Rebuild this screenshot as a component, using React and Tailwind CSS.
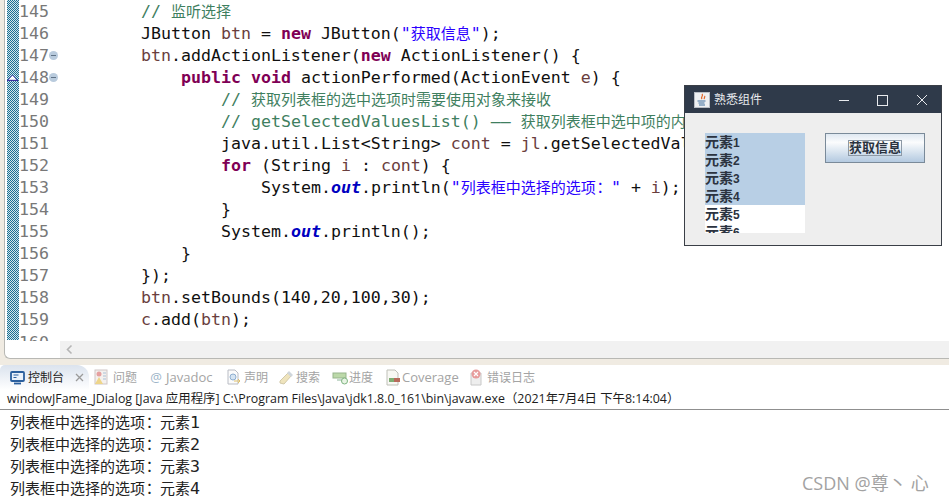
const codeFont = "font-['DejaVu_Sans_Mono','Noto_Sans_CJK_SC',monospace]";

const kw = "font-bold text-[#7f0055]";
const cm = "text-[#3f7f5f]";
const st = "text-[#2a00ff]";
const fd = "font-bold italic text-[#0000c0]";
const va = "text-[#6a3e3e]";
const cj = "text-[15px]";
// full width colon sits in the middle of its cell in the screenshot, a bit left of TC's
const colon = "ml-[-3px] mr-[3px] font-['Noto_Sans_CJK_TC',sans-serif]";

const lines = [
  {
    n: 145,
    indent: 2,
    code: (
      <span className={cm}>
        // <span className={cj}>监听选择</span>
      </span>
    ),
  },
  {
    n: 146,
    indent: 2,
    code: (
      <>
        JButton <span className={va}>btn</span> = <span className={kw}>new</span> JButton(
        <span className={st}>
          "<span className={cj}>获取信息</span>"
        </span>
        );
      </>
    ),
  },
  {
    n: 147,
    indent: 2,
    fold: true,
    code: (
      <>
        <span className={va}>btn</span>.addActionListener(<span className={kw}>new</span> ActionListener() {"{"}
      </>
    ),
  },
  {
    n: 148,
    indent: 3,
    fold: true,
    mark: true,
    code: (
      <>
        <span className={kw}>public</span> <span className={kw}>void</span> actionPerformed(ActionEvent <span className={va}>e</span>) {"{"}
      </>
    ),
  },
  {
    n: 149,
    indent: 4,
    code: (
      <span className={cm}>
        // <span className={cj}>获取列表框的选中选项时需要使用对象来接收</span>
      </span>
    ),
  },
  {
    n: 150,
    indent: 4,
    code: (
      <span className={cm}>
        // getSelectedValuesList() —— <span className={cj}>获取列表框中选中项的内容</span>
      </span>
    ),
  },
  {
    n: 151,
    indent: 4,
    code: (
      <>
        java.util.List&lt;String&gt; <span className={va}>cont</span> = <span className={va}>jl</span>.getSelectedValuesList();
      </>
    ),
  },
  {
    n: 152,
    indent: 4,
    code: (
      <>
        <span className={kw}>for</span> (String <span className={va}>i</span> : <span className={va}>cont</span>) {"{"}
      </>
    ),
  },
  {
    n: 153,
    indent: 5,
    code: (
      <>
        System.<span className={fd}>out</span>.println(
        <span className={st}>
          "<span className={cj}>列表框中选择的选项<span className={colon}>：</span></span>"
        </span>{" "}
        + <span className={va}>i</span>);
      </>
    ),
  },
  { n: 154, indent: 4, code: "}" },
  {
    n: 155,
    indent: 4,
    code: (
      <>
        System.<span className={fd}>out</span>.println();
      </>
    ),
  },
  { n: 156, indent: 3, code: "}" },
  { n: 157, indent: 2, code: "});" },
  {
    n: 158,
    indent: 2,
    code: (
      <>
        <span className={va}>btn</span>.setBounds(140,20,100,30);
      </>
    ),
  },
  {
    n: 159,
    indent: 2,
    code: (
      <>
        <span className={va}>c</span>.add(<span className={va}>btn</span>);
      </>
    ),
  },
  { n: 160, indent: 0, code: "" },
];

const indentClass = ["pl-0", "pl-[40px]", "pl-[82px]", "pl-[122px]", "pl-[162px]", "pl-[202px]"];

function FoldIcon() {
  return (
    <svg width="9" height="9" viewBox="0 0 9 9" className="block">
      <circle cx="4.5" cy="4.5" r="4.5" fill="#b9cbdd" />
      <path d="M2 4.500h5" stroke="#5f7286" strokeWidth="1" />
    </svg>
  );
}

function CodeLine({ line }) {
  return (
    <div className="flex h-[22.07px] items-center">
      <div className="relative flex w-[40px] shrink-0 items-center text-[#787878]">
        <span>{line.n}</span>
        {line.fold && (
          <span className="absolute left-[30px] top-[7px]">
            <FoldIcon />
          </span>
        )}
        {line.mark && (
          <svg width="11" height="7" viewBox="0 0 11 7" className="absolute -left-[12px] top-[8px]">
            <path d="M0.500 6.500 5.500 1 10.500 6.500Z" fill="#fff" stroke="#5347b0" strokeWidth="1" />
            <path d="M0 6.500h11" stroke="#3a2fa0" strokeWidth="1.4" />
          </svg>
        )}
      </div>
      <div className={`whitespace-pre text-[#101010] ${indentClass[line.indent]}`}>{line.code}</div>
    </div>
  );
}

function Editor() {
  return (
    <div className="flex h-[359px] bg-[#f0ebe2]">
      <div className="ml-[4px] flex min-w-0 flex-1 flex-col overflow-hidden rounded-bl-[6px] border-b border-l border-[#b8b8b4] bg-white">
        <div className={`flex h-[341px] overflow-hidden text-[16.6px] ${codeFont}`}>
          <div className="ml-[2px] h-[340px] w-[12px] shrink-0 bg-[repeating-conic-gradient(#1a6e94_0_25%,#d4e6ea_0_50%)] bg-[length:2px_2px]" />
          <div className="min-w-0 flex-1 pt-[1px]">
            {lines.map((line) => (
              <CodeLine key={line.n} line={line} />
            ))}
          </div>
        </div>
        <div className="flex h-[17px] shrink-0 pl-[55px]">
          <div className="flex flex-1 items-center bg-[#f1f1f1] pl-[5px]">
            <svg width="9" height="11" viewBox="0 0 9 11">
              <path d="M6.500 1.500 2.500 5.500l4 4" fill="none" stroke="#b5b5b5" strokeWidth="1.6" />
            </svg>
          </div>
        </div>
      </div>
    </div>
  );
}

function TabIcon({ children }) {
  return (
    <svg width="17" height="17" viewBox="0 0 17 17" className="shrink-0">
      {children}
    </svg>
  );
}

function ConsoleTabs() {
  const tabs = [
    {
      label: "问题",
      w: "w-[56px]",
      cls: "gap-[3px] text-[12px]",
      icon: (
        <TabIcon>
          <rect x="2" y="1" width="12" height="14" fill="#f4f0ee" stroke="#cfc6c6" />
          <circle cx="6" cy="5" r="2.500" fill="#e6a0a0" />
          <path d="M2 15 6 8l4 7Z" fill="#eed58a" />
          <path d="M10 4h3M10 7h3M10 10h3" stroke="#a9c0d6" />
        </TabIcon>
      ),
    },
    {
      label: "Javadoc",
      w: "w-[76px]",
      cls: "gap-[3px] text-[13px]",
      icon: <span className="flex w-[14px] justify-center text-[13px] text-[#9db4c8]">@</span>,
    },
    {
      label: "声明",
      w: "w-[53px]",
      cls: "gap-[2px] text-[12px]",
      icon: (
        <TabIcon>
          <path d="M3 1h7l3 3v11H3Z" fill="#fbfbfb" stroke="#b9bcc4" />
          <circle cx="8" cy="8" r="3" fill="#d5e4f2" stroke="#8eaed0" />
          <path d="M9 12h6l-2-2m2 2-2 2" fill="none" stroke="#dfc06a" />
        </TabIcon>
      ),
    },
    {
      label: "搜索",
      w: "w-[54px]",
      cls: "gap-[1px] text-[12px]",
      icon: (
        <TabIcon>
          <path d="M2 12 10 4l3 3-7 8-4-1Z" fill="#efe4bd" stroke="#d2c9a8" />
          <path d="M11 2l4 4-2 2-4-4Z" fill="#cfd6dc" />
        </TabIcon>
      ),
    },
    {
      label: "进度",
      w: "w-[53px]",
      cls: "gap-[0px] text-[12px]",
      icon: (
        <TabIcon>
          <rect x="1" y="4" width="13" height="5" fill="#bcd9a9" stroke="#97b58d" />
          <path d="M5 11h5" stroke="#8eb59a" />
          <circle cx="12.500" cy="12" r="3" fill="#e8f4e4" stroke="#7fb481" />
        </TabIcon>
      ),
    },
    {
      label: "Coverage",
      w: "w-[83px]",
      cls: "gap-[0px] text-[13px]",
      icon: (
        <TabIcon>
          <path d="M2 1h8l3 3v12H2Z" fill="#f8f8f4" stroke="#bfc0b8" />
          <rect x="4" y="9" width="5" height="4" fill="#7fae74" />
          <rect x="9" y="9" width="6" height="4" fill="#b86a5c" />
        </TabIcon>
      ),
    },
    {
      label: "错误日志",
      w: "w-[70px]",
      cls: "gap-[2px] text-[12px]",
      icon: (
        <TabIcon>
          <path d="M3 4h10v12H3Z" fill="#eee" stroke="#c8c8c8" />
          <circle cx="8" cy="5" r="4.500" fill="#e79c9c" />
          <path d="M6 3l4 4m0-4-4 4" stroke="#fff" strokeWidth="1.2" />
        </TabIcon>
      ),
    },
  ];

  return (
    <div className="flex h-[31px] items-end bg-[#f0ebe2] pt-[6px] font-['Open_Sans','Noto_Sans_CJK_SC',sans-serif] text-[12px]">
      <div className="flex h-full w-full items-center bg-white">
        <div className="flex h-full w-[89px] shrink-0 items-center gap-[3px] rounded-tl-[5px] rounded-tr-[12px] bg-gradient-to-b from-[#dbe3ee] to-white pl-[10px] text-[#222]">
          <svg width="15" height="14" viewBox="0 0 15 14" className="shrink-0">
            <rect x="1" y="1" width="13" height="9" rx="1" fill="#eaf2fb" stroke="#2a5f9e" strokeWidth="1.8" />
            <path d="M4 12.500h7" stroke="#2a5f9e" strokeWidth="1.8" />
            <path d="M3.500 4h5M3.500 6.500h3" stroke="#2a5f9e" />
          </svg>
          <span className="text-[12px]">控制台</span>
          <svg width="9" height="9" viewBox="0 0 9 9" className="ml-[8px]">
            <path d="M1 1l7 7m0-7-7 7" stroke="#9a9a9a" strokeWidth="1.300" fill="none" />
          </svg>
        </div>
        <div className="flex items-center pl-[4px] text-[#a4a4a4]">
          {tabs.map((t) => (
            <div key={t.label} className={`flex shrink-0 items-center whitespace-nowrap ${t.cls} ${t.w}`}>
              {t.icon}
              <span>{t.label}</span>
            </div>
          ))}
        </div>
      </div>
    </div>
  );
}

function Console() {
  return (
    <div className="h-[111px] overflow-hidden bg-white">
      <div className="flex h-[20px] items-center overflow-hidden whitespace-pre border-b border-[#8f8f8f] pl-[7px] font-['Open_Sans','Noto_Sans_CJK_SC',sans-serif] text-[12.4px] text-[#1c1c1c]">
        windowJFame_JDialog [Java 应用程序] C:\Program Files\Java\jdk1.8.0_161\bin\javaw.exe（2021年7月4日 下午8:14:04）
      </div>
      <div className={`pl-[10px] pt-[1px] text-[15px] text-[#222] ${codeFont}`}>
        {[1, 2, 3, 4].map((i) => (
          <div key={i} className="h-[22px] whitespace-pre leading-[22px]">
            列表框中选择的选项<span className={colon}>：</span>元素<span className="text-[16.6px]">{i}</span>
          </div>
        ))}
      </div>
    </div>
  );
}

function JavaIcon() {
  return (
    <svg width="16" height="16" viewBox="0 0 16 16">
      <rect x="0.500" y="0.500" width="15" height="15" fill="#eef0f2" stroke="#b9bec6" />
      <path d="M8 2c2 2-2 3 0 5M10.500 4c1 1-1 2 0 3" fill="none" stroke="#e0672a" strokeWidth="1.300" />
      <path d="M3.500 9h8M4.500 11h6M5 13h6" stroke="#3f6e9e" strokeWidth="1" />
    </svg>
  );
}

function SwingWindow() {
  return (
    <div className="absolute left-[684px] top-[85px] h-[161px] w-[258px] border border-[#3a3f47] bg-[#eeeeee] font-['Liberation_Sans','Noto_Sans_CJK_SC',sans-serif]">
      <div className="flex h-[27px] items-center bg-[#2f3a4a] pl-[9px] text-[12px] text-[#e8eaee]">
        <JavaIcon />
        <span className="ml-[4px]">熟悉组件</span>
        <div className="ml-auto flex items-center">
          <svg width="40" height="14" viewBox="0 0 40 14">
            <path d="M17 7.500h10" stroke="#e8eaee" />
          </svg>
          <svg width="40" height="14" viewBox="0 0 40 14">
            <rect x="15.500" y="2.500" width="10" height="10" fill="none" stroke="#e8eaee" />
          </svg>
          <svg width="39" height="14" viewBox="0 0 39 14">
            <path d="M15 2l10 10m0-10-10 10" stroke="#e8eaee" fill="none" />
          </svg>
        </div>
      </div>
      <div className="flex items-start gap-[20px] pl-[20px] pt-[20px]">
        <div className="h-[100px] w-[100px] overflow-hidden bg-white text-[14px] font-bold text-[#2b3340]">
          {[1, 2, 3, 4, 5, 6].map((i) => (
            <div key={i} className={`h-[18px] overflow-hidden pt-[1px] leading-[17px] ${i <= 4 ? "bg-[#b8cfe5]" : "bg-white"}`}>
              元素<span className="text-[12px]">{i}</span>
            </div>
          ))}
        </div>
        <div className="flex h-[30px] w-[100px] items-center justify-center border border-[#7a8a99] bg-gradient-to-b from-[#dfe8f1] via-[#fbfcfd] via-30% to-[#b4cae0]">
          <span className="border border-[#8d99a6] text-[13px] font-bold leading-[14px] text-[#2b3340]">获取信息</span>
        </div>
      </div>
    </div>
  );
}

export default function App() {
  return (
    <div className="relative h-[501px] w-[949px] overflow-hidden bg-white">
      <Editor />
      <ConsoleTabs />
      <Console />
      <SwingWindow />
      <div className="absolute left-[802px] top-[470px] whitespace-pre font-['Open_Sans','Noto_Sans_CJK_SC',sans-serif] text-[18px] text-[#a2a2a2]">
        CSDN @尊丶<span className="ml-[4px]">心</span>
      </div>
    </div>
  );
}
